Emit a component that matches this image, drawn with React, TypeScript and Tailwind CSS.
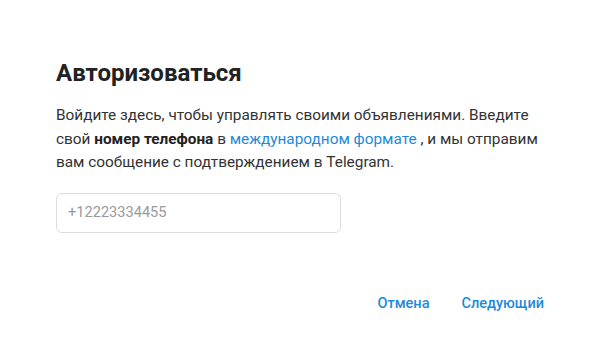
export default function App() {
  return (
    <div className="w-[602px] h-[355px] bg-white font-['Roboto',sans-serif] text-[#222]">
      <div className="px-[56px] pt-[57px] flex flex-col">
        <h1 className="text-[24px] leading-[32px] font-bold text-[#222]">Авторизоваться</h1>
        <p className="mt-[15px] text-[15.35px] leading-[23.5px] text-[#333]">
          Войдите здесь, чтобы управлять своими объявлениями. Введите свой{" "}
          <b className="font-bold text-[#222]">номер телефона</b> в{" "}
          <a className="text-[#1e8ad8]">международном формате</a> , и мы отправим вам сообщение с
          подтверждением в Telegram.
        </p>
        <div className="mt-[18px] w-[285px] h-[40px] border border-[#dcdcdc] rounded-[6px] flex items-center px-[11px]">
          <input
            className="w-full outline-none text-[14.6px] text-[#333] placeholder:text-[#9a9a9a] bg-transparent"
            placeholder="+12223334455"
          />
        </div>
        <div className="mt-[61px] flex justify-end gap-[32px] pr-[2px]">
          <button className="text-[14.5px] leading-[20px] font-medium text-[#1e8ad8]">Отмена</button>
          <button className="text-[14.5px] leading-[20px] font-medium text-[#1e8ad8]">Следующий</button>
        </div>
      </div>
    </div>
  );
}
